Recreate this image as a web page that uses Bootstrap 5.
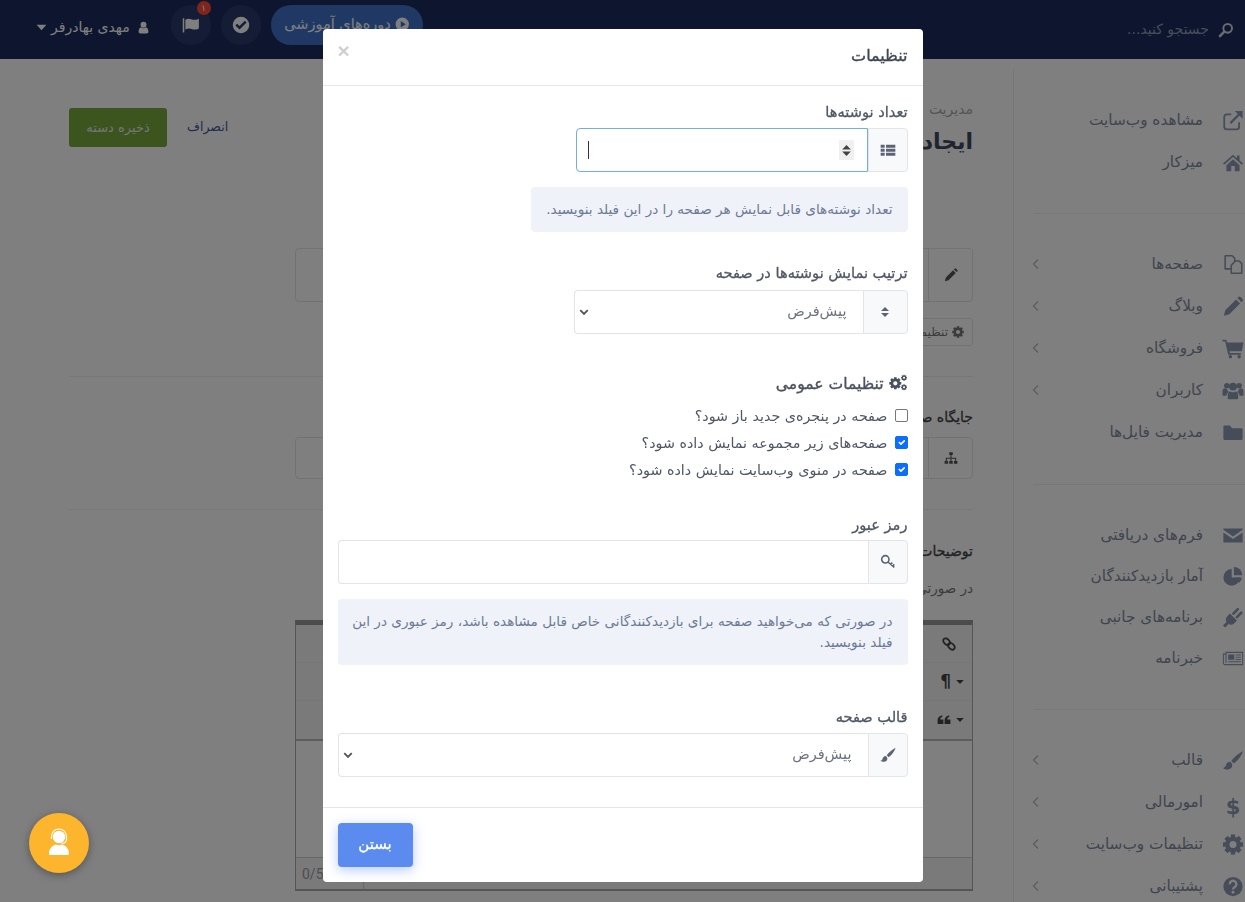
<!DOCTYPE html>
<html lang="fa" dir="rtl">
<head>
    <meta charset="UTF-8">
    <meta name="viewport" content="width=device-width, initial-scale=1.0">
    <title>تنظیمات</title>
    <link href="https://cdn.jsdelivr.net/npm/bootstrap@5.3.0/dist/css/bootstrap.min.css" rel="stylesheet">
    <style>
        html, body { height: 100%; overflow: hidden; }
        body { font-family: "DejaVu Sans", "Noto Sans", sans-serif; font-size: 14px; color: #3f4a5c; background: #fff; }
        .ico { display: inline-block; width: 1em; height: 1em; fill: currentColor; flex: none; }

        /* top bar */
        .top-bar { height: 59px; background: #1c2b5e; color: #fff; padding: 0 11px 0 35px; }
        .top-search { color: #8f99b5; font-size: 14px; gap: 9px; }
        .top-search .ico { font-size: 16px; color: #d0d4de; }
        .top-tools { gap: 10px; }
        .pill-link { height: 40px; width: 152px; border-radius: 20px; background: #4073c8; color: #fff; font-size: 14.5px; margin-top: -10px; }
        .round-btn { width: 40px; height: 40px; border-radius: 50%; background: #2b3a6c; color: #fff; margin-top: -10px; font-size: 18px; position: relative; }
        .flag-count { position: absolute; top: -4px; left: 26px; width: 14px; height: 14px; border-radius: 50%; background: #ff4a3d; color: #fff; font-size: 9px; line-height: 14px; text-align: center; }
        .top-user { color: #fff; font-size: 14px; margin-top: -5px; margin-right: 11px; gap: 3px; }
        .top-user .ico { font-size: 13px; }
        .top-user .user-mark { margin-left: 4px; }

        /* sidebar */
        .side-nav { width: 232px; flex: none; height: 843px; margin-top: 9px; border-left: 1px solid #ececec; padding: 31px 0 0 16px; color: #7f8a9e; }
        .side-item { height: 42px; display: flex; align-items: center; font-size: 15.3px; }
        .side-item.tight { height: 41px; }
        .side-item .ico { font-size: 21px; width: 22px; margin: 0 1px 0 19px; color: #8c9ab0; }
        .side-item .side-arrow { font-size: 12px; width: 12px; margin: 0 auto 0 0; color: #b5b5b5; }
        .side-rule { height: 1px; background: #eee; margin: 0; }
        .rule-a { margin: 30px 0 29px 4px; }
        .rule-b { margin: 31px 0 30px 4px; }

        /* page behind the dialog */
        .main-pane { flex: 1; min-width: 0; padding: 40px 40px 0 69px; }
        .crumb { color: #a9a9a9; font-size: 14px; line-height: 18px; margin-top: 1px; }
        .page-title { font-size: 22px; font-weight: 700; line-height: 30px; margin: 9px 0 0; color: #3f4a5c; }
        .top-actions { margin-top: 9px; }
        .save-btn { width: 98px; height: 39px; background: #78a83c; color: #e8e8e8; font-size: 13px; border: 0; border-radius: 3px; }
        .cancel-link { color: #3d5c99; font-size: 12.5px; margin-left: 20px; }
        .back-field { width: 75%; display: flex; border: 1px solid #e4e4e4; border-radius: 4px; }
        .back-field .ico { font-size: 14px; color: #555; }
        .back-addon { width: 44px; border-left: 1px solid #e4e4e4; }
        .back-tag { width: 120px; height: 28px; margin-top: 16px; border: 1px solid #e4e4e4; border-radius: 3px; font-size: 12px; padding: 0 8px; color: #777; }
        .back-rule { height: 1px; background: #eee; }
        .back-label { font-size: 14px; -webkit-text-stroke: .3px; line-height: 20px; color: #444; }
        .back-note { margin-top: 18px; line-height: 18px; font-size: 13.5px; color: #777; }
        .editor-box { width: 75%; height: 271px; margin-top: 23px; border: 1px solid #aaa; border-top: 5px solid #999; border-bottom-width: 2px; }
        .editor-tools { height: 116px; border-bottom: 2px solid #bbb; background: #f5f5f5; }
        .tool-row { height: 38px; padding: 0 16px 0 0; color: #444; font-size: 14px; border-bottom: 1px solid #ececec; }
        .tool-menu { padding: 0 7px 0 0; }
        .tool-menu .ico { font-size: 10px; }
        .tool-menu .tool-glyph { font-size: 17px; }
        .editor-foot { height: 32px; margin-top: 116px; border-top: 1px solid #ccc; background: #f5f5f5; font: 14px "Roboto", sans-serif; color: #999; }
        .foot-count { width: 68px; height: 100%; padding-left: 6px; border-right: 1px solid #ccc; }

        /* dialog */
        .settings-dialog { max-width: 600px; margin: 29px auto 0; }
        .settings-dialog .modal-content { border: 0; border-radius: 4px; color: #4f5665; }
        .settings-dialog .modal-header { height: 57px; padding: 0 15px 4px 15px; border-bottom: 1px solid #e5e5e5; }
        .settings-title { font-size: 16px; font-weight: 400; -webkit-text-stroke: .35px; color: #3f4653; margin: 2px 0 0; }
        .close-x { border: 0; background: none; padding: 0 5px 0 0; color: #cfcfcf; font: 700 21px/1 "Liberation Sans", sans-serif; margin-top: -10px; }
        .settings-dialog .modal-body { padding: 15px 15px 30px; }
        .field-label { font-size: 14.6px; font-weight: 400; -webkit-text-stroke: .3px; line-height: 21px; margin: 0; color: #4f5665; display: block; }
        .field-group { margin-top: 6px; }
        .field-group .input-group-text { width: 40px; justify-content: center; background: #f8f9fa; border-color: #e2e4e8; color: #5b6472; font-size: 16px; padding: 0; border-radius: 0 4px 4px 0 !important; }
        .field-group .form-control, .field-group .form-select { height: 44px; margin-left: 0 !important; border-color: #e2e4e8; border-right: 0; border-radius: 4px 0 0 4px !important; font-size: 14.5px; color: #6a7280; box-shadow: none; }
        .field-group .form-select { background-image: url("data:image/svg+xml,%3csvg xmlns='http://www.w3.org/2000/svg' viewBox='0 0 16 16'%3e%3cpath fill='none' stroke='%23555' stroke-width='3' d='m2 5 6 6 6-6'/%3e%3c/svg%3e"); background-position: left 4px center; background-size: 10px 10px; padding: 0 16px 0 24px; }
        .count-group { width: 332px; position: relative; }
        .count-group .form-control { border: 1px solid #6fb0de; border-right: 1px solid #6fb0de; -moz-appearance: textfield; }
        .count-group input::-webkit-inner-spin-button { -webkit-appearance: none; }
        .count-caret { position: absolute; left: 13px; top: 13px; width: 1px; height: 18px; background: #333; z-index: 6; }
        .count-spin { position: absolute; left: 264px; top: 12px; width: 15px; height: 20px; background: #f0f0f0; color: #444; font-size: 13px; z-index: 6; }
        .order-group { width: 334px; margin-top: 7px; }
        .order-group .input-group-text { width: 45px; }
        .pass-group { margin-top: 5px; }
        .tip-box { background: #f0f2f9; border: 0; border-radius: 4px; color: #6d7a96; font-size: 13.6px; line-height: 21px; padding: 12px 15px; margin: 15px 0 0; }
        .tip-short { width: fit-content; }
        .tip-wide { padding-left: 5px; }
        .general-head { font-size: 15.6px; font-weight: 400; -webkit-text-stroke: .35px; line-height: 24px; margin: 0 0 6px; color: #4a5160; }
        .general-head .ico { font-size: 19px; vertical-align: -3px; }
        .block-a { margin-top: 30px; }
        .block-b { margin-top: 38px; }
        .block-c { margin-top: 41px; }
        .settings-dialog .form-check { min-height: 0; height: 27.2px; padding: 0 20px 0 0; margin: 0; font-size: 14.3px; line-height: 26px; display: flex; align-items: center; }
        .settings-dialog .form-check-input { float: none; margin: 0 -20px 0 7px; width: 13px; height: 13px; border-color: #777; border-radius: 2px; flex: none; }
        .settings-dialog .form-check-input:checked { background-color: #0d6efd; border-color: #0d6efd; }
        .settings-dialog .modal-footer { justify-content: flex-end; padding: 15px; border-top: 1px solid #e5e5e5; }
        .close-btn { width: 75px; height: 44px; margin: 0; background: #5b8bef; border: 0; color: #fff; font-size: 15px; font-weight: 400; -webkit-text-stroke: .3px; border-radius: 4px; box-shadow: 0 3px 12px rgba(91, 139, 239, .45); }

        .support-fab { position: fixed; left: 29px; bottom: 29px; width: 60px; height: 60px; border-radius: 50%; background: #fdb52d; z-index: 1060; box-shadow: 0 2px 8px rgba(0, 0, 0, .35); color: #fff; font-size: 34px; }
    </style>
</head>
<body>
    <svg width="0" height="0" class="position-absolute" aria-hidden="true">
        <defs>
            <symbol id="i-search" viewBox="0 0 24 24"><circle cx="14.5" cy="9.5" r="6.5" fill="none" stroke="currentColor" stroke-width="3"/><path d="M9.5 14.5 3 21" stroke="currentColor" stroke-width="4" stroke-linecap="round"/></symbol>
            <symbol id="i-user" viewBox="0 0 24 24"><circle cx="12" cy="7" r="5.5"/><path d="M3 20c0-5 1.500-8 4.500-8.500 1.200 1 2.800 1.700 4.500 1.700s3.300-.7 4.500-1.700c3 .5 4.500 3.500 4.500 8.500 0 2-1.200 3-3 3H6c-1.800 0-3-1-3-3z"/></symbol>
            <symbol id="i-flag" viewBox="0 0 24 24"><path d="M1 3h2v19H1zM4.500 5c3-2 6-1.500 8.500-.5s5.500 1 9.500-1v13c-3.500 2-6.500 2-9 1s-5.500-1.500-9 .5z"/></symbol>
            <symbol id="i-check" viewBox="0 0 24 24"><path fill-rule="evenodd" d="M12 1a11 11 0 1 0 0 22 11 11 0 0 0 0-22zM10 18l-5.500-5.500 2.300-2.300L10 13.400l7.200-7.200 2.300 2.300z"/></symbol>
            <symbol id="i-play" viewBox="0 0 24 24"><path fill-rule="evenodd" d="M12 1a11 11 0 1 0 0 22 11 11 0 0 0 0-22zM9.500 6.500v11l8.500-5.500z"/></symbol>
            <symbol id="i-caret" viewBox="0 0 24 24"><path d="M3 7h18l-9 10z"/></symbol>
            <symbol id="i-external" viewBox="0 0 24 24"><path d="M10 5H5a3 3 0 0 0-3 3v11a3 3 0 0 0 3 3h11a3 3 0 0 0 3-3v-5" fill="none" stroke="currentColor" stroke-width="2"/><path d="M9 15 19 5" stroke="currentColor" stroke-width="2.500"/><path d="M14 1h9v9z"/></symbol>
            <symbol id="i-home" viewBox="0 0 24 24"><path d="M12 3 .5 13 2 14.600l10-8.800 10 8.800 1.500-1.600-4-3.500V4h-3v3z"/><path d="M4.500 15 12 8.300l7.500 6.700v7H14v-6h-4v6H4.500z"/></symbol>
            <symbol id="i-files" viewBox="0 0 24 24"><path d="M14 8h5l3 3v11H10V17M3 2h8l3 3v3.500L10 13v4H3z" fill="none" stroke="currentColor" stroke-width="1.800" stroke-linejoin="round"/></symbol>
            <symbol id="i-pencil" viewBox="0 0 24 24"><path d="m1.500 22.500 1.700-6.300L15.500 3.900 20.100 8.500 7.800 20.800zM17 2.400l1.200-1.200a1.800 1.800 0 0 1 2.500 0l2.100 2.100a1.800 1.800 0 0 1 0 2.500L21.600 7z"/></symbol>
            <symbol id="i-cart" viewBox="0 0 24 24"><path d="M0 2h4.500l.6 3H24l-2 10H8l.4 2H21v2H6.500L3 4H0z"/><circle cx="9" cy="21.500" r="2"/><circle cx="19" cy="21.500" r="2"/></symbol>
            <symbol id="i-users" viewBox="0 0 24 24"><circle cx="5" cy="6.500" r="3.200"/><circle cx="19" cy="6.500" r="3.200"/><circle cx="12" cy="7.500" r="4.500"/><path d="M0 13c0-2 1-3.500 3-3.500l2 .8c.5 1.500 1.200 2.500 2.200 3.400C5.500 15 4.700 16 4.500 18H1c-.6 0-1-.5-1-1zM24 13c0-2-1-3.500-3-3.500l-2 .8c-.5 1.500-1.200 2.500-2.200 3.400 1.700 1.300 2.500 2.300 2.700 4.300H23c.6 0 1-.5 1-1zM6 18c0-3 1.200-5 3-5 1 .8 2 1 3 1s2-.2 3-1c1.800 0 3 2 3 5v2.500c0 1-.7 1.500-1.500 1.500h-9C6.700 22 6 21.500 6 20.500z"/></symbol>
            <symbol id="i-folder" viewBox="0 0 24 24"><path d="M1 5.500A1.500 1.500 0 0 1 2.500 4h6L11 7h10.500A1.500 1.500 0 0 1 23 8.500V19a1.500 1.500 0 0 1-1.500 1.500h-19A1.500 1.500 0 0 1 1 19z"/></symbol>
            <symbol id="i-mail" viewBox="0 0 24 24"><path d="M1 4h22v1.500L12 13 1 5.500zM1 8.500l11 7.500 11-7.500V20H1z"/></symbol>
            <symbol id="i-pie" viewBox="0 0 24 24"><path d="M10.500 3.500a9.500 9.500 0 1 0 9.500 9.500h-9.500z"/><path d="M13 1v9.500h9.500A9.500 9.500 0 0 0 13 1z"/><path d="M13.500 13H22a9 9 0 0 1-2.700 6z"/></symbol>
            <symbol id="i-plug" viewBox="0 0 24 24"><path d="m8.500 7.500 8 8-3 3a5.500 5.500 0 0 1-6.500 1L3 23.500l-2.500-2.500L4.500 17a5.500 5.500 0 0 1 1-6.500z"/><path d="m12.500 7.500 5-5M16.500 11.500l5-5" stroke="currentColor" stroke-width="3" stroke-linecap="round"/></symbol>
            <symbol id="i-news" viewBox="0 0 24 24"><path d="M4 5h19v14H3a2 2 0 0 1-2-2V7h3zM4 7v10" fill="none" stroke="currentColor" stroke-width="1.200"/><path d="M6.500 7.500h7v6h-7zM15 7.500h6v1.200h-6zM15 10h6v1.200h-6zM15 12.500h6v1.200h-6zM6.500 15h14.500v1.200H6.500z"/></symbol>
            <symbol id="i-brush" viewBox="0 0 24 24"><path d="M23.500 1c-5 2.500-10 6.500-13.500 11.500l3 2.800C18 11.500 22 6 23.500 1z"/><path d="M8.800 13.500c-3 .2-4.500 2-5 4-.4 1.800-1.300 2.800-3.300 3 3 2.500 7.500 2.200 9.700-.3 1.700-2 1-5-1.400-6.700z"/></symbol>
            <symbol id="i-cog" viewBox="0 0 24 24"><circle cx="12" cy="12" r="6.500" fill="none" stroke="currentColor" stroke-width="5"/><rect x="9.500" y="0.500" width="5" height="5"/><rect x="9.500" y="18.500" width="5" height="5"/><rect x="0.500" y="9.500" width="5" height="5"/><rect x="18.500" y="9.500" width="5" height="5"/><rect x="9.500" y="0.500" width="5" height="5" transform="rotate(45 12 12)"/><rect x="9.500" y="18.500" width="5" height="5" transform="rotate(45 12 12)"/><rect x="0.500" y="9.500" width="5" height="5" transform="rotate(45 12 12)"/><rect x="18.500" y="9.500" width="5" height="5" transform="rotate(45 12 12)"/></symbol>
            <symbol id="i-cogs" viewBox="0 0 24 24"><use href="#i-cog" x="0" y="5" width="16" height="16"/><use href="#i-cog" x="15" y="2" width="8" height="8"/><use href="#i-cog" x="15" y="14" width="8" height="8"/></symbol>
            <symbol id="i-help" viewBox="0 0 24 24"><circle cx="12" cy="12" r="11"/><path d="M8.300 9.300a3.800 3.800 0 1 1 5.800 3.200c-1.300.8-2.100 1.300-2.100 2.800" fill="none" stroke="#fff" stroke-width="2.600"/><circle cx="12" cy="18.500" r="1.700" fill="#fff"/></symbol>
            <symbol id="i-chevron" viewBox="0 0 24 24"><path d="M16 3 7 12l9 9" fill="none" stroke="currentColor" stroke-width="2.200"/></symbol>
            <symbol id="i-list" viewBox="0 0 24 24"><path d="M1 4h6v4.500H1zM9 4h14v4.500H9zM1 10h6v4.500H1zM9 10h14v4.500H9zM1 16h6v4.500H1zM9 16h14v4.500H9z"/></symbol>
            <symbol id="i-sort" viewBox="0 0 24 24"><path d="M12 2 20 10H4zM12 22l8-8H4z"/></symbol>
            <symbol id="i-key" viewBox="0 0 24 24"><circle cx="8" cy="8" r="5.500" fill="none" stroke="currentColor" stroke-width="2.400"/><path d="m12 12 9.500 8M16 15.500l2.500-2.500M19 18l2.500-2.500" fill="none" stroke="currentColor" stroke-width="2.400"/></symbol>
            <symbol id="i-sitemap" viewBox="0 0 24 24"><path d="M9 2h6v5h-6zM1 17h6v5H1zM9 17h6v5H9zM17 17h6v5h-6z"/><path d="M12 7v10M4 17v-4.500h16V17" fill="none" stroke="currentColor" stroke-width="1.800"/></symbol>
            <symbol id="i-link" viewBox="0 0 24 24"><g fill="none" stroke="currentColor" stroke-width="3"><ellipse cx="8" cy="8" rx="6.500" ry="4.500" transform="rotate(45 8 8)"/><ellipse cx="16" cy="16" rx="6.500" ry="4.500" transform="rotate(45 16 16)"/></g></symbol>
            <symbol id="i-quote" viewBox="0 0 24 24"><path d="M1 13c0-5 3-8 8-9v3c-2 .6-3.500 2-3.500 4H11v8H1zM13 13c0-5 3-8 8-9v3c-2 .6-3.500 2-3.500 4H23v8H13z"/></symbol>
            <symbol id="i-agent" viewBox="0 0 34 34"><circle cx="17" cy="11" r="6.200"/><path d="M8.500 29c-1 0-1.500-.5-1.500-1.500 0-4.500 3-8 7-9 1 .6 2 .8 3 .8s2-.2 3-.8c4 1 7 4.500 7 9 0 1-.5 1.500-1.500 1.500z"/><path d="M9.500 13v-2.500a7.500 7.500 0 0 1 15 0V13c0 3-2 4.500-5 4.500" fill="none" stroke="currentColor" stroke-width="1.200"/></symbol>
        </defs>
    </svg>

    <nav class="top-bar d-flex align-items-center">
        <div class="top-search d-flex align-items-center"><svg class="ico"><use href="#i-search"/></svg><span>جستجو کنید...</span></div>
        <div class="top-tools d-flex align-items-center me-auto">
            <a class="pill-link d-flex align-items-center justify-content-center gap-1 text-decoration-none"><svg class="ico"><use href="#i-play"/></svg>دوره‌های آموزشی</a>
            <span class="round-btn d-flex align-items-center justify-content-center"><svg class="ico"><use href="#i-check"/></svg></span>
            <span class="round-btn d-flex align-items-center justify-content-center"><svg class="ico"><use href="#i-flag"/></svg><span class="flag-count">۱</span></span>
            <span class="top-user d-flex align-items-center"><svg class="ico user-mark"><use href="#i-user"/></svg>مهدی بهادرفر<svg class="ico"><use href="#i-caret"/></svg></span>
        </div>
    </nav>

    <div class="d-flex">
        <aside class="side-nav">
            <div class="side-item"><svg class="ico"><use href="#i-external"/></svg>مشاهده وب‌سایت</div>
            <div class="side-item"><svg class="ico"><use href="#i-home"/></svg>میزکار</div>
            <div class="side-rule rule-a"></div>
            <div class="side-item"><svg class="ico"><use href="#i-files"/></svg>صفحه‌ها<svg class="ico side-arrow"><use href="#i-chevron"/></svg></div>
            <div class="side-item"><svg class="ico"><use href="#i-pencil"/></svg>وبلاگ<svg class="ico side-arrow"><use href="#i-chevron"/></svg></div>
            <div class="side-item"><svg class="ico"><use href="#i-cart"/></svg>فروشگاه<svg class="ico side-arrow"><use href="#i-chevron"/></svg></div>
            <div class="side-item"><svg class="ico"><use href="#i-users"/></svg>کاربران<svg class="ico side-arrow"><use href="#i-chevron"/></svg></div>
            <div class="side-item"><svg class="ico"><use href="#i-folder"/></svg>مدیریت فایل‌ها</div>
            <div class="side-rule rule-b"></div>
            <div class="side-item tight"><svg class="ico"><use href="#i-mail"/></svg>فرم‌های دریافتی</div>
            <div class="side-item tight"><svg class="ico"><use href="#i-pie"/></svg>آمار بازدیدکنندگان</div>
            <div class="side-item tight"><svg class="ico"><use href="#i-plug"/></svg>برنامه‌های جانبی</div>
            <div class="side-item tight"><svg class="ico"><use href="#i-news"/></svg>خبرنامه</div>
            <div class="side-rule rule-a"></div>
            <div class="side-item"><svg class="ico"><use href="#i-brush"/></svg>قالب<svg class="ico side-arrow"><use href="#i-chevron"/></svg></div>
            <div class="side-item"><span class="ico text-center fw-bold">$</span>امورمالی<svg class="ico side-arrow"><use href="#i-chevron"/></svg></div>
            <div class="side-item"><svg class="ico"><use href="#i-cog"/></svg>تنظیمات وب‌سایت<svg class="ico side-arrow"><use href="#i-chevron"/></svg></div>
            <div class="side-item"><svg class="ico"><use href="#i-help"/></svg>پشتیبانی<svg class="ico side-arrow"><use href="#i-chevron"/></svg></div>
        </aside>

        <main class="main-pane">
            <div class="d-flex justify-content-between align-items-start">
                <div>
                    <div class="crumb">مدیریت</div>
                    <h1 class="page-title">ایجاد صفحه</h1>
                </div>
                <div class="top-actions d-flex align-items-center">
                    <a class="cancel-link text-decoration-none">انصراف</a>
                    <button class="save-btn" type="button">ذخیره دسته</button>
                </div>
            </div>

            <div class="back-field" style="height:54px;margin-top:91px"><span class="back-addon d-flex align-items-center justify-content-center"><svg class="ico"><use href="#i-pencil"/></svg></span></div>
            <div class="back-tag d-flex align-items-center gap-1"><svg class="ico"><use href="#i-cog"/></svg>تنظیمات</div>
            <div class="back-rule" style="margin-top:30px"></div>
            <div class="back-label" style="margin-top:30px">جایگاه صفحه</div>
            <div class="back-field" style="height:42px;margin-top:10px"><span class="back-addon d-flex align-items-center justify-content-center"><svg class="ico"><use href="#i-sitemap"/></svg></span></div>
            <div class="back-rule" style="margin-top:30px"></div>
            <div class="back-label" style="margin-top:31px">توضیحات صفحه</div>
            <div class="back-note">در صورتی که</div>
            <div class="editor-box">
                <div class="editor-tools">
                    <div class="tool-row d-flex align-items-center"><svg class="ico"><use href="#i-link"/></svg></div>
                    <div class="tool-row tool-menu d-flex align-items-center gap-1" dir="ltr"><span class="ms-auto tool-glyph fw-bold">¶</span><svg class="ico"><use href="#i-caret"/></svg></div>
                    <div class="tool-row tool-menu d-flex align-items-center gap-1 border-0" dir="ltr"><svg class="ico ms-auto" style="font-size:14px"><use href="#i-quote"/></svg><svg class="ico"><use href="#i-caret"/></svg></div>
                </div>
                <div class="editor-foot d-flex justify-content-end"><span class="foot-count d-flex align-items-center" dir="ltr">0/5000</span></div>
            </div>
        </main>
    </div>

    <div class="modal-backdrop fade show"></div>
    <div class="modal d-block overflow-hidden" tabindex="-1">
        <div class="modal-dialog settings-dialog">
            <div class="modal-content">
                <div class="modal-header">
                    <h5 class="settings-title">تنظیمات</h5>
                    <button class="close-x" type="button">×</button>
                </div>
                <div class="modal-body">
                    <label class="field-label">تعداد نوشته‌ها</label>
                    <div class="input-group field-group count-group">
                        <span class="input-group-text"><svg class="ico"><use href="#i-list"/></svg></span>
                        <input class="form-control" type="number" dir="ltr">
                        <span class="count-caret"></span>
                        <span class="count-spin d-flex align-items-center justify-content-center"><svg class="ico"><use href="#i-sort"/></svg></span>
                    </div>
                    <div class="alert tip-box tip-short">تعداد نوشته‌های قابل نمایش هر صفحه را در این فیلد بنویسید.</div>

                    <label class="field-label block-a">ترتیب نمایش نوشته‌ها در صفحه</label>
                    <div class="input-group field-group order-group">
                        <span class="input-group-text"><svg class="ico" style="font-size:12px"><use href="#i-sort"/></svg></span>
                        <select class="form-select"><option>پیش‌فرض</option></select>
                    </div>

                    <h6 class="general-head block-b"><svg class="ico"><use href="#i-cogs"/></svg> تنظیمات عمومی</h6>
                    <div class="form-check"><input class="form-check-input" type="checkbox"><label class="form-check-label">صفحه در پنجره‌ی جدید باز شود؟</label></div>
                    <div class="form-check"><input class="form-check-input" type="checkbox" checked><label class="form-check-label">صفحه‌های زیر مجموعه نمایش داده شود؟</label></div>
                    <div class="form-check"><input class="form-check-input" type="checkbox" checked><label class="form-check-label">صفحه در منوی وب‌سایت نمایش داده شود؟</label></div>

                    <label class="field-label block-a">رمز عبور</label>
                    <div class="input-group field-group pass-group">
                        <span class="input-group-text"><svg class="ico"><use href="#i-key"/></svg></span>
                        <input class="form-control" type="text">
                    </div>
                    <div class="alert tip-box tip-wide">در صورتی که می‌خواهید صفحه برای بازدیدکنندگانی خاص قابل مشاهده باشد، رمز عبوری در این فیلد بنویسید.</div>

                    <label class="field-label block-c">قالب صفحه</label>
                    <div class="input-group field-group">
                        <span class="input-group-text"><svg class="ico"><use href="#i-brush"/></svg></span>
                        <select class="form-select"><option>پیش‌فرض</option></select>
                    </div>
                </div>
                <div class="modal-footer">
                    <button class="close-btn" type="button">بستن</button>
                </div>
            </div>
        </div>
    </div>

    <a class="support-fab d-flex align-items-center justify-content-center"><svg class="ico"><use href="#i-agent"/></svg></a>

    <script src="https://cdn.jsdelivr.net/npm/bootstrap@5.3.0/dist/js/bootstrap.bundle.min.js"></script>
</body>
</html>
